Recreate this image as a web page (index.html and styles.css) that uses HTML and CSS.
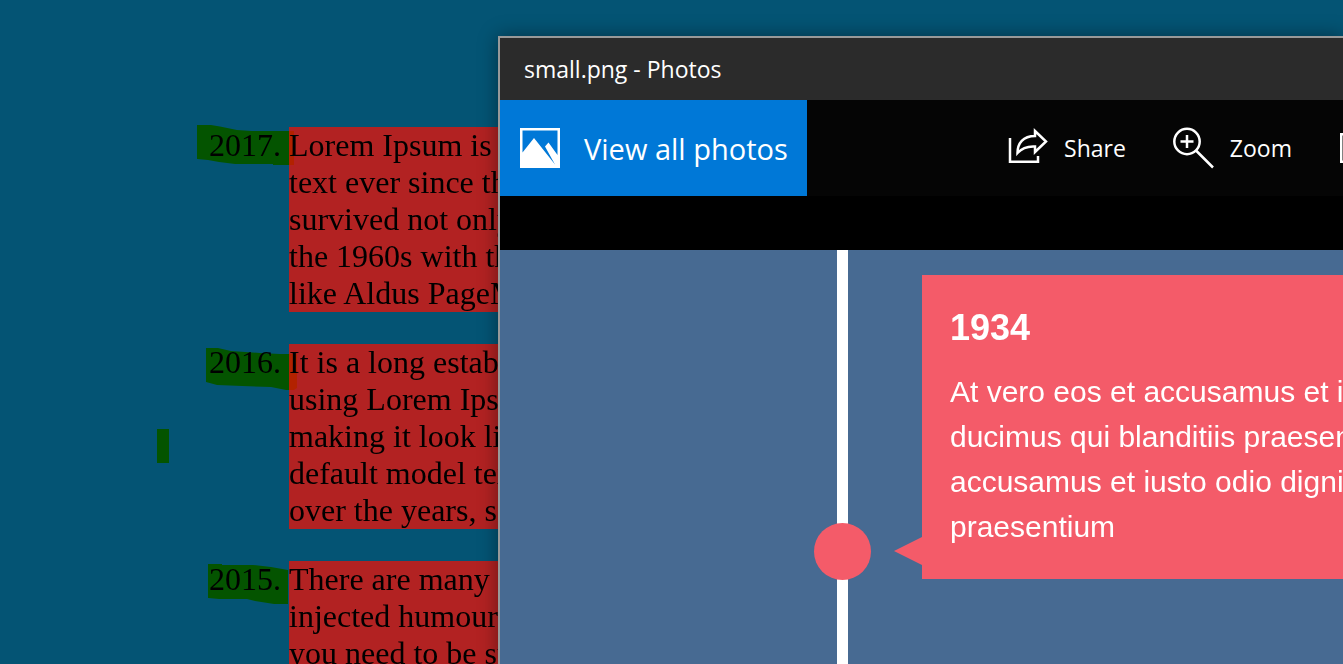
FILE: index.html
```html
<!DOCTYPE html>
<html lang="en">
<head>
<meta charset="utf-8">
<title>Timeline</title>
<link rel="stylesheet" href="styles.css">
</head>
<body>
<main class="page">
  <ol class="years" reversed start="2017">
    <li>Lorem Ipsum is<br>text ever since the<br>survived not only<br>the 1960s with the<br>like Aldus PageMaker</li>
    <li>It is a long established<br>using Lorem Ipsum<br>making it look like<br>default model text<br>over the years, sometimes</li>
    <li>There are many<br>injected humour<br>you need to be sure</li>
  </ol>
  <svg class="ink" width="180" height="500" viewBox="140 110 180 500" aria-hidden="true">
    <path d="M197 125H211L220 126.500L237 130L252 131H294V165H273V164H235L219 162L208 160L197 159Z"/>
    <path d="M206 348H218L231 351L260 353L280 354H297V388L294 390H286L271 387L242 386L217 385L206 382Z"/>
    <path d="M157 429H169V463H157Z"/>
    <path d="M208 564H222V565H253L271 567L288 570V604H274L255 601L247 599H219L208 598Z"/>
  </svg>
</main>

<section class="window" aria-label="small.png - Photos">
  <header class="titlebar">small.png - Photos</header>
  <nav class="toolbar">
    <button class="view-all" type="button">
      <svg width="40" height="40" viewBox="0 0 40 40" aria-hidden="true"><path fill="#fff" fill-rule="evenodd" d="M0 0H40V40H0ZM2.500 2.500V24.500L14 10L35 36.500L25 18.500L28.500 14.500L37.500 27V2.500Z"/></svg>
      <span>View all photos</span>
    </button>
    <div class="commands">
      <button class="command" type="button">
        <svg width="40" height="40" viewBox="0 0 40 40" fill="none" stroke="#fff" stroke-width="2.500" aria-hidden="true"><path d="M2 10V33.750H30V28"/><path d="M27 3L38 13.500L27 24V18.500C19 18 14 20 9.500 25C9.500 15.500 15 8 27 8Z"/></svg>
        <span>Share</span>
      </button>
      <button class="command" type="button">
        <svg width="40" height="40" viewBox="0 0 40 40" fill="none" stroke="#fff" stroke-width="2.500" aria-hidden="true"><circle cx="13" cy="13.500" r="12.700"/><path d="M6.500 13.500H19.500M13 7V20M22 22.500L39 39.500"/></svg>
        <span>Zoom</span>
      </button>
      <button class="command" type="button" aria-label="Slideshow">
        <svg width="40" height="40" viewBox="0 0 40 40" fill="none" stroke="#fff" stroke-width="2.500" aria-hidden="true"><path d="M1.250 6.250H38V33.750H1.250Z"/></svg>
      </button>
    </div>
  </nav>
  <div class="photo">
    <div class="rail"><span class="dot"></span></div>
    <article class="card">
      <h2>1934</h2>
      <p>At vero eos et accusamus et iusto<br>ducimus qui blanditiis praesentium<br>accusamus et iusto odio dignissimos<br>praesentium</p>
    </article>
  </div>
</section>
</body>
</html>
```
FILE: styles.css
```css
* { box-sizing: border-box; }

body {
  margin: 0;
  height: 100vh;
  overflow: hidden;
  position: relative;
  background: #045474;
}

.page {
  height: 100vh;
  overflow: hidden;
  padding-top: 127px;
  background: #045474;
  font: 32px/37px "Liberation Serif", serif;
  color: #000;
  position: relative;
}

.years {
  margin: 0;
  padding-left: 289px;
}

.years li {
  margin-bottom: 32px;
  background: #b22222;
  white-space: nowrap;
}

/* Highlighter strokes laid over the list */
.ink {
  position: absolute;
  left: 140px;
  top: 110px;
  fill: #ff0;
  mix-blend-mode: multiply;
}

.window {
  position: absolute;
  inset: 36px 0 0 498px;
  display: flex;
  flex-direction: column;
  overflow: hidden;
  border: solid #999;
  border-width: 2px 0 0 2px;
  background: #000;
  color: #fff;
  box-shadow: 0 0 18px rgba(0, 0, 0, .4);
  font-family: "Open Sans", "Noto Sans", sans-serif;
}

.titlebar {
  flex: none;
  height: 62px;
  padding-left: 24px;
  background: #2b2b2b;
  font-size: 23px;
  line-height: 62px;
}

.toolbar {
  flex: none;
  display: flex;
  height: 96px;
  margin-bottom: 54px;
  background: #050505;
}

button {
  border: 0;
  padding: 0;
  color: inherit;
  background: none;
  font: inherit;
  display: flex;
  align-items: center;
  white-space: nowrap;
}

button svg {
  flex: none;
  overflow: visible;
}

.view-all {
  flex: none;
  width: 307px;
  padding-left: 20px;
  gap: 24px;
  background: #0078d7;
  font-size: 29px;
}

.commands {
  display: flex;
  gap: 48px;
  margin-left: auto;
  margin-right: -37px;
}

.command {
  gap: 16px;
  font-size: 23px;
}

.photo {
  flex: 1;
  display: flex;
  align-items: flex-start;
  background: #476a92;
}

.rail {
  flex: none;
  align-self: stretch;
  position: relative;
  width: 11px;
  margin-left: 337px;
  background: #fff;
}

.dot {
  position: absolute;
  left: -23px;
  top: 273px;
  width: 57px;
  height: 57px;
  border-radius: 50%;
  background: #f45b69;
}

.card {
  flex: 1;
  min-width: 0;
  position: relative;
  margin: 25px 0 0 74px;
  padding: 28px 0 30px 28px;
  background: #f45b69;
  font: 30px/45px "Liberation Sans", sans-serif;
  white-space: nowrap;
}

.card::before {
  content: "";
  position: absolute;
  right: 100%;
  bottom: 14px;
  border: solid transparent;
  border-width: 14px 28px 14px 0;
  border-right-color: #f45b69;
}

.card h2 {
  margin: 0 0 16px;
  font-size: 36px;
  line-height: 50px;
}

.card p { margin: 0; }
```
